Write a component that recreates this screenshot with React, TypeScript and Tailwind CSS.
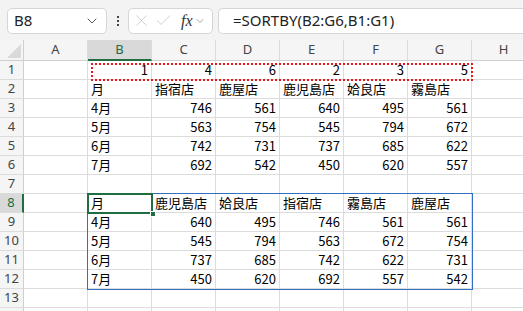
import React from 'react';
import { ChevronDown, X, Check } from 'lucide-react';

const COLS = ['A', 'B', 'C', 'D', 'E', 'F', 'G', 'H'];

type Cell = string | number | null;

// rows 1..14, columns A..H
const DATA: Cell[][] = [
  [null, 1, 4, 6, 2, 3, 5, null],
  [null, '月', '指宿店', '鹿屋店', '鹿児島店', '姶良店', '霧島店', null],
  [null, '4月', 746, 561, 640, 495, 561, null],
  [null, '5月', 563, 754, 545, 794, 672, null],
  [null, '6月', 742, 731, 737, 685, 622, null],
  [null, '7月', 692, 542, 450, 620, 557, null],
  [null, null, null, null, null, null, null, null],
  [null, '月', '鹿児島店', '姶良店', '指宿店', '霧島店', '鹿屋店', null],
  [null, '4月', 640, 495, 746, 561, 561, null],
  [null, '5月', 545, 794, 563, 672, 754, null],
  [null, '6月', 737, 685, 742, 622, 731, null],
  [null, '7月', 450, 620, 692, 557, 542, null],
  [null, null, null, null, null, null, null, null],
  [null, null, null, null, null, null, null, null],
];

const cellFont = { fontFamily: '"Noto Sans CJK JP", "Noto Sans", sans-serif' };

function FormulaBar() {
  return (
    <div className="flex h-[40px] items-center gap-0 bg-[#f3f3f3] pt-[1px]">
      <div className="ml-[7px] flex h-[26px] w-[100px] items-center justify-between rounded-[5px] border border-[#d6d6d6] bg-white pl-[6px] pr-[6px]">
        <span className="text-[15px] text-[#222]" style={{ fontFamily: '"Noto Sans", sans-serif' }}>
          B8
        </span>
        <ChevronDown className="h-4 w-4 text-[#555]" strokeWidth={1.5} />
      </div>
      <div className="flex w-[21px] flex-col items-center gap-[2px]">
        <span className="h-[2px] w-[2px] bg-[#444]" />
        <span className="h-[2px] w-[2px] bg-[#444]" />
        <span className="h-[2px] w-[2px] bg-[#444]" />
      </div>
      <div className="flex h-[26px] w-[85px] items-center rounded-[5px] border border-[#d6d6d6] bg-white pl-[3px]">
        <X className="h-[19px] w-[19px] text-[#c4c4c4]" strokeWidth={1} />
        <Check className="ml-[3px] h-[19px] w-[19px] text-[#c4c4c4]" strokeWidth={1} />
        <span
          className="ml-[8px] text-[16px] italic text-[#333]"
          style={{ fontFamily: '"Liberation Serif", serif' }}
        >
          fx
        </span>
        <ChevronDown className="ml-[1px] h-3 w-3 text-[#888]" strokeWidth={1.5} />
      </div>
      <div className="ml-[5px] flex h-[26px] flex-1 items-center rounded-l-[5px] border border-r-0 border-[#d6d6d6] bg-white pl-[14px]">
        <span className="text-[15px] text-[#222]" style={{ fontFamily: '"Noto Sans", sans-serif' }}>
          =SORTBY(B2:G6,B1:G1)
        </span>
      </div>
    </div>
  );
}

function ColumnHeader() {
  return (
    <div className="flex h-[21px] bg-[#f5f5f5]">
      <div className="relative h-[21px] w-[24px] shrink-0 border-b border-r border-[#cfcfcf]">
        <svg className="absolute bottom-[2px] right-[2px]" width="14" height="14" viewBox="0 0 14 14">
          <polygon points="14,0 14,14 0,14" fill="#d9d9d9" />
        </svg>
      </div>
      {COLS.map((c) => {
        const sel = c === 'B';
        return (
          <div
            key={c}
            className={`flex h-[21px] w-[64px] shrink-0 items-center justify-center border-r border-[#dcdcdc] text-[13px] ${
              sel
                ? 'border-b-2 border-b-[#1e6e42] bg-[#d9d9d9] text-[#1e6e42]'
                : 'border-b border-b-[#cfcfcf] text-[#444]'
            }`}
            style={{ fontFamily: '"Noto Sans", sans-serif' }}
          >
            {c}
          </div>
        );
      })}
    </div>
  );
}

function Row({ n, cells }: { n: number; cells: Cell[] }) {
  const sel = n === 8;
  return (
    <div className="flex h-[19px]">
      <div
        className={`flex h-[19px] w-[24px] shrink-0 items-center justify-center border-b border-b-[#dcdcdc] text-[13px] ${
          sel
            ? 'border-r-2 border-r-[#1e6e42] bg-[#d9d9d9] text-[#1e6e42]'
            : 'border-r border-r-[#cfcfcf] bg-[#f5f5f5] text-[#444]'
        }`}
        style={{ fontFamily: '"Noto Sans", sans-serif' }}
      >
        {n < 14 ? n : ''}
      </div>
      {cells.map((v, i) => {
        const num = typeof v === 'number';
        return (
          <div
            key={i}
            className={`flex h-[19px] w-[64px] shrink-0 items-end overflow-visible whitespace-nowrap border-b border-r border-[#dcdcdc] bg-white px-[3px] text-[13px] leading-[18px] text-black ${
              num ? 'justify-end' : 'justify-start'
            }`}
            style={cellFont}
          >
            {v}
          </div>
        );
      })}
    </div>
  );
}

export default function App() {
  return (
    <div className="h-[311px] w-[523px] overflow-hidden bg-white">
      <FormulaBar />
      <div className="relative">
        <ColumnHeader />
        {DATA.map((r, i) => (
          <Row key={i} n={i + 1} cells={r} />
        ))}
        {/* copy marquee B1:G1 */}
        <div className="pointer-events-none absolute left-[91px] top-[23px] h-[18px] w-[382px] border-2 border-dotted border-[#e8191c]" />
        {/* spill range B8:G12 */}
        <div className="pointer-events-none absolute left-[87px] top-[153px] h-[97px] w-[386px] border border-[#2f6fc4]" />
        {/* active cell B8 */}
        <div className="pointer-events-none absolute left-[87px] top-[153px] h-[21px] w-[66px] border-2 border-[#1e6e42]" />
        <div className="pointer-events-none absolute left-[150px] top-[171px] h-[6px] w-[6px] border border-white bg-[#1e6e42]" />
      </div>
    </div>
  );
}
